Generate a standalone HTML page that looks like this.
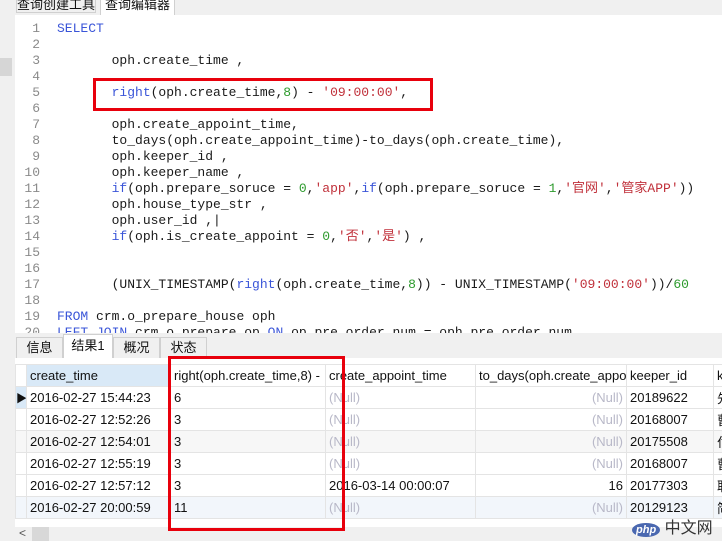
<!DOCTYPE html>
<html><head><meta charset="utf-8"><style>
*{margin:0;padding:0;box-sizing:border-box}
body{width:722px;height:541px;overflow:hidden;background:#f0f0f0;position:relative;font-family:"Liberation Sans","Noto Sans CJK SC",sans-serif}
.abs{position:absolute}
.code{position:absolute;left:15px;top:15px;width:707px;height:318px;background:#fff;overflow:hidden}
.ln{position:absolute;left:0;width:25px;text-align:right;color:#8a8a8a;font:13px "Liberation Mono",monospace}
.cl{position:absolute;left:42px;white-space:pre;font:13px "Liberation Mono","Noto Sans CJK SC",monospace;color:#1a1a1a}
.k{color:#3a55d8}.s{color:#c0303a}.n{color:#2c9a2c}
.tab{position:absolute;font-size:13px;color:#111;border:1px solid #d0d0d0;border-bottom:none;text-align:center;line-height:20px;background:#f0f0f0}
table{border-collapse:collapse;font-size:13px;color:#111}
td{height:22px;border:1px solid #e4e4e4;padding:0 3px;white-space:nowrap;overflow:hidden}
.nl{color:#b8b8c8;text-align:right}
.red{position:absolute;border:3px solid #e8000c}
</style></head><body>
<div class="tab" style="left:16px;top:-5px;width:80px;height:18px;line-height:18px;border-bottom:1px solid #d0d0d0">查询创建工具</div>
<div class="tab" style="left:100px;top:-5px;width:75px;height:20px;line-height:18px;background:#fff">查询编辑器</div>
<div class="abs" style="left:0;top:58px;width:12px;height:18px;background:#d6d6d6"></div>
<div class="code">
<div class="ln" style="top:6px;line-height:16px">1<br>2<br>3<br>4<br>5<br>6<br>7<br>8<br>9<br>10<br>11<br>12<br>13<br>14<br>15<br>16<br>17<br>18<br>19<br>20</div>
<div class="cl" style="top:6px;line-height:16px"><span class="k">SELECT</span>

       oph.create_time ,

       <span class="k">right</span>(oph.create_time,<span class="n">8</span>) - <span class="s">'09:00:00'</span>,

       oph.create_appoint_time,
       to_days(oph.create_appoint_time)-to_days(oph.create_time),
       oph.keeper_id ,
       oph.keeper_name ,
       <span class="k">if</span>(oph.prepare_soruce = <span class="n">0</span>,<span class="s">'app'</span>,<span class="k">if</span>(oph.prepare_soruce = <span class="n">1</span>,<span class="s">'官网'</span>,<span class="s">'管家APP'</span>))
       oph.house_type_str ,
       oph.user_id ,|
       <span class="k">if</span>(oph.is_create_appoint = <span class="n">0</span>,<span class="s">'否'</span>,<span class="s">'是'</span>) ,


       (UNIX_TIMESTAMP(<span class="k">right</span>(oph.create_time,<span class="n">8</span>)) - UNIX_TIMESTAMP(<span class="s">'09:00:00'</span>))/<span class="n">60</span>

<span class="k">FROM</span> crm.o_prepare_house oph
<span class="k">LEFT JOIN</span> crm.o_prepare_op <span class="k">ON</span> op.pre_order_num = oph.pre_order_num</div>
</div>
<div class="red" style="left:93px;top:78px;width:340px;height:33px"></div>
<div class="tab" style="left:16px;top:337px;width:47px;height:21px">信息</div>
<div class="tab" style="left:63px;top:334px;width:50px;height:25px;background:#fff;line-height:22px">结果1</div>
<div class="tab" style="left:113px;top:337px;width:47px;height:21px">概况</div>
<div class="tab" style="left:160px;top:337px;width:47px;height:21px">状态</div>
<div class="abs" style="left:15px;top:358px;width:707px;height:169px;background:#fff"></div>
<table class="abs" style="left:15px;top:364px;table-layout:fixed;width:720px">
<colgroup><col style="width:11px"><col style="width:144px"><col style="width:155px"><col style="width:150px"><col style="width:151px"><col style="width:87px"><col style="width:22px"></colgroup>
<tr style="background:#fff"><td style="background:#fff"></td><td style="background:#d9e9f7">create_time</td><td>right(oph.create_time,8) -</td><td>create_appoint_time</td><td>to_days(oph.create_appoi</td><td>keeper_id</td><td>k</td></tr>
<tr><td style="background:#d9e9f7;padding:0;font-size:11px">▶</td><td>2016-02-27 15:44:23</td><td>6</td><td class="nl" style="text-align:left">(Null)</td><td class="nl">(Null)</td><td>20189622</td><td>先</td></tr>
<tr><td></td><td>2016-02-27 12:52:26</td><td>3</td><td class="nl" style="text-align:left">(Null)</td><td class="nl">(Null)</td><td>20168007</td><td>曹</td></tr>
<tr style="background:#f7f7f7"><td></td><td>2016-02-27 12:54:01</td><td>3</td><td class="nl" style="text-align:left">(Null)</td><td class="nl">(Null)</td><td>20175508</td><td>付</td></tr>
<tr><td></td><td>2016-02-27 12:55:19</td><td>3</td><td class="nl" style="text-align:left">(Null)</td><td class="nl">(Null)</td><td>20168007</td><td>曹</td></tr>
<tr><td></td><td>2016-02-27 12:57:12</td><td>3</td><td>2016-03-14 00:00:07</td><td style="text-align:right">16</td><td>20177303</td><td>耿</td></tr>
<tr style="background:#f2f6fb"><td></td><td>2016-02-27 20:00:59</td><td>11</td><td class="nl" style="text-align:left">(Null)</td><td class="nl">(Null)</td><td>20129123</td><td>简</td></tr>
</table>
<div class="abs" style="left:15px;top:527px;width:707px;height:14px;background:#f0f0f0"></div>
<div class="abs" style="left:19px;top:526px;font-size:12px;color:#555">&lt;</div>
<div class="abs" style="left:32px;top:527px;width:17px;height:14px;background:#d8d8d8"></div>
<div class="red" style="left:168px;top:356px;width:177px;height:175px"></div>
<div class="abs" style="left:632px;top:514px;font-size:16px;color:#333"><span style="display:inline-block;background:#4a68b0;color:#fff;border-radius:50%;font:italic bold 11px 'Liberation Sans';padding:1px 4px">php</span> 中文网</div>
</body></html>
